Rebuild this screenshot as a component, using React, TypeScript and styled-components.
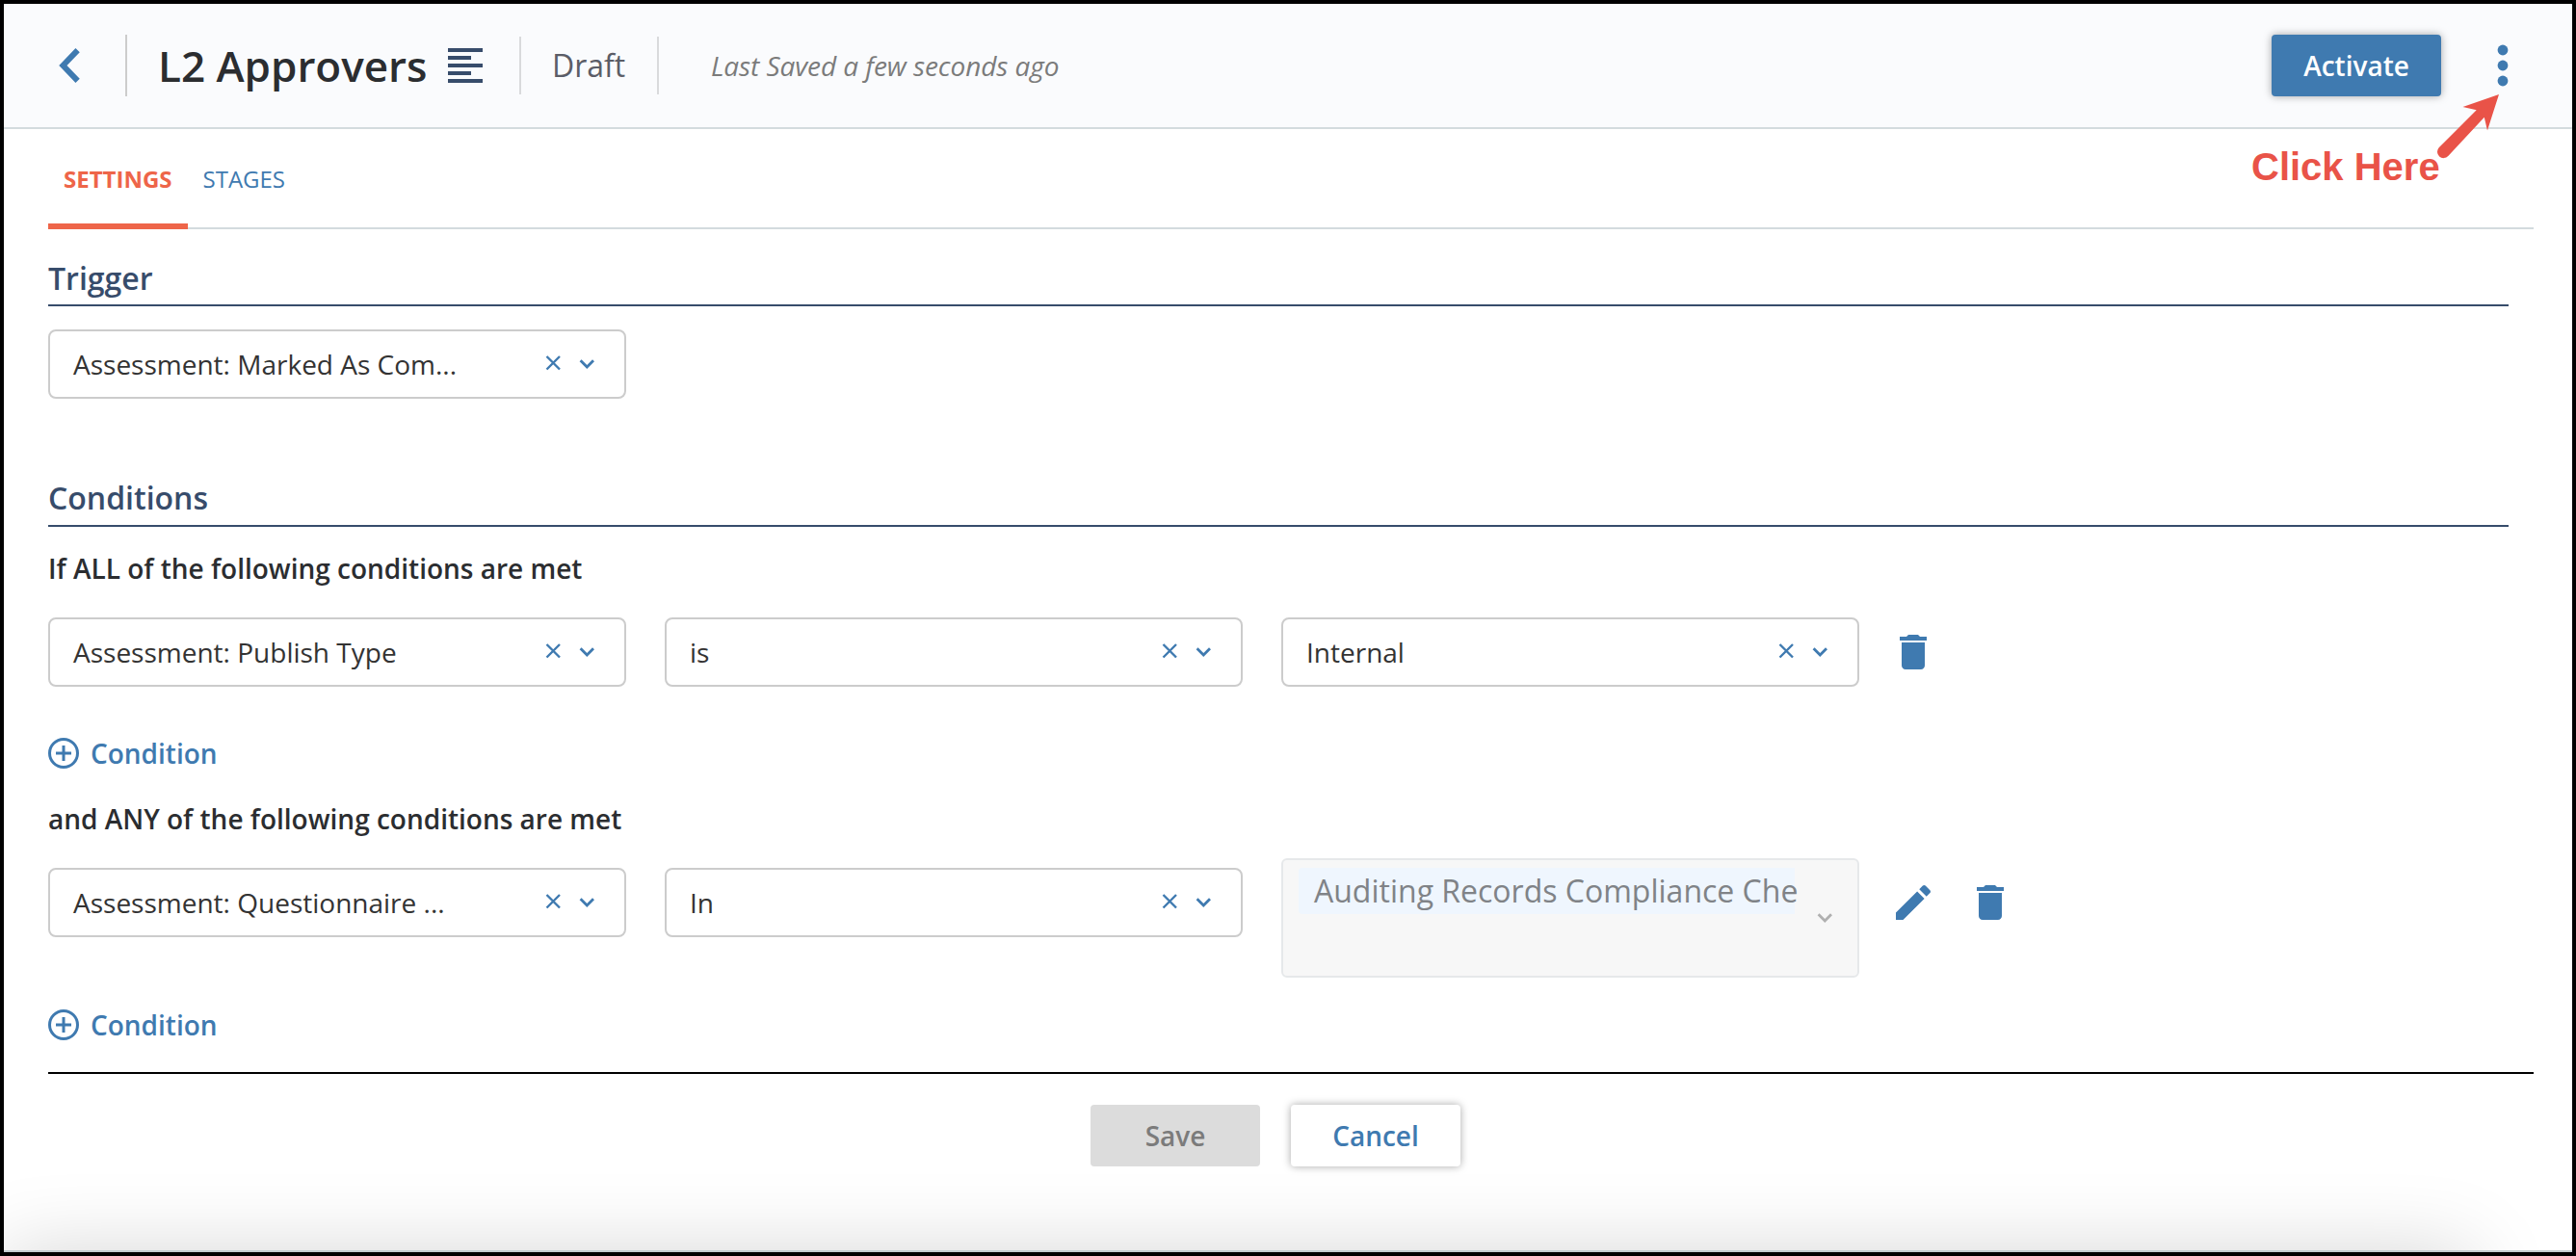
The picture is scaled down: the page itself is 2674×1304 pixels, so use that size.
import { useState } from "react";
import styled, { createGlobalStyle } from "styled-components";

const colors = {
    blue: "#3f7ab0",
    navy: "#374c6b",
    orange: "#ee6549",
    red: "#e95348",
    text: "#2b2d30",
    line: "#d3dbde",
};

const GlobalStyle = createGlobalStyle`
    * {
        box-sizing: border-box;
    }
    body {
        margin: 0;
        background: #000000;
        font-family: "Open Sans", "Noto Sans", sans-serif;
        color: ${colors.text};
    }
    button {
        font-family: inherit;
        cursor: pointer;
    }
`;

const Page = styled.div`
    position: relative;
    width: 2674px;
    height: 1304px;
    border: 4px solid #000000;
    background: #ffffff;
    overflow: hidden;
`;

const Header = styled.header`
    display: flex;
    align-items: center;
    height: 130px;
    padding: 0 61px 0 44px;
    background: #fafbfd;
    border-bottom: 2px solid ${colors.line};
`;

const IconButton = styled.button`
    display: flex;
    align-items: center;
    justify-content: center;
    width: 48px;
    height: 48px;
    padding: 0;
    border: 0;
    background: none;
    color: ${colors.blue};
`;

const Separator = styled.span<{ $height?: number; $gap: string }>`
    width: 2px;
    height: ${(p) => p.$height || 60}px;
    margin: ${(p) => p.$gap};
    background: ${(p) => (p.$height ? "#cccccc" : "#d9dadc")};
`;

const Title = styled.h1`
    width: 301px;
    margin: 0;
    font-size: 44px;
    font-weight: 600;
    line-height: 60px;
    white-space: nowrap;
`;

const Status = styled.span`
    width: 109px;
    font-size: 32px;
    line-height: 44px;
    color: #5b5d67;
`;

const LastSaved = styled.em`
    flex: 1;
    font-size: 28px;
    line-height: 38px;
    letter-spacing: -0.07px;
    color: #7b7b7b;
`;

const Button = styled.button<{ $variant: "primary" | "plain" | "disabled" }>`
    width: 176px;
    height: 64px;
    padding: 0;
    border: 0;
    border-radius: 4px;
    font-size: 28px;
    font-weight: 600;
    line-height: 38px;
    color: ${(p) => ({ primary: "#ffffff", plain: colors.blue, disabled: "#7b7b7b" })[p.$variant]};
    background: ${(p) => ({ primary: colors.blue, plain: "#ffffff", disabled: "#dcdcdc" })[p.$variant]};
    box-shadow: ${(p) => (p.$variant === "disabled" ? "none" : "0 0 8px rgba(0, 0, 0, 0.35)")};
`;

const MoreButton = styled(IconButton)`
    margin-left: 40px;
    margin-right: -13px;
`;

const Callout = styled.div`
    position: absolute;
    top: 92px;
    left: 2333px;
    font-family: "Liberation Sans", Arial, sans-serif;
    font-size: 40px;
    font-weight: 700;
    line-height: 46px;
    color: ${colors.red};

    span {
        display: block;
        padding-top: 54px;
        white-space: nowrap;
    }

    svg {
        position: absolute;
        left: 189px;
        top: 0;
    }
`;

const Content = styled.main`
    padding: 0 40px 0 46px;
`;

const Tabs = styled.nav`
    display: flex;
    height: 104px;
    box-shadow: inset 0 -2px 0 ${colors.line};
`;

const Tab = styled.button<{ $active: boolean }>`
    height: 104px;
    padding: 5px 16px 0;
    border: 0;
    border-bottom: 6px solid ${(p) => (p.$active ? colors.orange : "transparent")};
    background: none;
    font-size: 24px;
    font-weight: ${(p) => (p.$active ? 700 : 400)};
    color: ${(p) => (p.$active ? colors.orange : colors.blue)};
`;

const SectionTitle = styled.h2<{ $top: number; $bottom: number }>`
    margin: ${(p) => p.$top}px 26px 0 0;
    padding-bottom: ${(p) => p.$bottom}px;
    border-bottom: 2px solid ${colors.navy};
    font-size: 32px;
    font-weight: 600;
    line-height: 44px;
    color: ${colors.navy};
`;

const GroupTitle = styled.h3<{ $top: number }>`
    margin: ${(p) => p.$top}px 0 0;
    font-size: 28px;
    font-weight: 600;
    line-height: 38px;
`;

const Row = styled.div<{ $top: number }>`
    display: flex;
    align-items: flex-start;
    gap: 40px;
    margin-top: ${(p) => p.$top}px;
`;

const SelectBox = styled.div`
    display: flex;
    align-items: center;
    width: 600px;
    height: 72px;
    padding: 0 31px 0 24px;
    border: 2px solid #cccccc;
    border-radius: 8px;
    background: #ffffff;
    color: #333333;
`;

const SelectValue = styled.span`
    flex: 1;
    font-size: 28px;
    line-height: 38px;
    white-space: nowrap;
`;

const SelectIcons = styled.span`
    display: flex;
    align-items: center;
    gap: 19px;
    color: ${colors.blue};

    svg:first-child {
        margin-bottom: 3px;
    }
`;

const MultiBox = styled.div`
    display: flex;
    width: 600px;
    height: 124px;
    margin-top: -10px;
    padding: 8px 0 0 16px;
    border: 2px solid #e6e8ea;
    border-radius: 6px;
    background: #f7f7f7;
`;

const Chip = styled.span`
    width: 515px;
    height: 48px;
    padding-left: 16px;
    border-radius: 4px 0 0 4px;
    background: #eff6fe;
    font-size: 32px;
    line-height: 48px;
    white-space: nowrap;
    color: #808387;
`;

const MultiArrow = styled.span`
    display: flex;
    padding: 47px 0 0 23px;
    color: #b0b0b0;
`;

const RowActions = styled.div`
    display: flex;
    gap: 32px;
    padding: 12px 0;
    margin-left: -8px;
`;

const AddCondition = styled.button<{ $top: number }>`
    display: flex;
    align-items: center;
    gap: 12px;
    height: 38px;
    margin-top: ${(p) => p.$top}px;
    padding: 0;
    border: 0;
    background: none;
    font-size: 28px;
    font-weight: 600;
    line-height: 38px;
    color: ${colors.blue};
`;

const Footer = styled.footer`
    display: flex;
    justify-content: center;
    gap: 32px;
    margin-top: 30px;
    padding: 32px 32px 0 0;
    border-top: 2px solid #000000;
`;

// soft shade that rises from the bottom edge of the window
const BottomShade = styled.div`
    position: absolute;
    left: 0;
    right: 105px;
    bottom: -100px;
    height: 100px;
    box-shadow: 0 0 84px rgba(0, 0, 0, 0.17);
    pointer-events: none;
`;

const BottomEdge = styled.div`
    position: absolute;
    left: 0;
    right: 0;
    bottom: 0;
    height: 2px;
    background: #c3cccf;
`;

const CloseIcon = () => (
    <svg width="16" height="16" viewBox="0 0 16 16" fill="none" stroke="currentColor" strokeWidth="2.4">
        <path d="M1.5 1L15 14.5M15 1L1.5 14.5" />
    </svg>
);

const ChevronIcon = () => (
    <svg width="16" height="10" viewBox="0 0 16 10" fill="none" stroke="currentColor" strokeWidth="2.8">
        <path d="M1.6 1.2L8.3 7.9L15 1.2" />
    </svg>
);

const TrashIcon = () => (
    <svg width="48" height="48" viewBox="0 0 24 24" fill="currentColor">
        <path d="M6 19c0 1.1.9 2 2 2h8c1.1 0 2-.9 2-2V7H6v12zM19 4h-3.5l-1-1h-5l-1 1H5v2h14V4z" />
    </svg>
);

const PencilIcon = () => (
    <svg width="48" height="48" viewBox="0 0 24 24" fill="currentColor">
        <path d="M3 17.25V21h3.75L17.81 9.94l-3.75-3.75L3 17.25zM20.71 7.04c.39-.39.39-1.02 0-1.41l-2.34-2.34c-.39-.39-1.02-.39-1.41 0l-1.83 1.83 3.75 3.75 1.83-1.83z" />
    </svg>
);

const PlusCircleIcon = () => (
    <svg width="32" height="32" viewBox="0 0 32 32" fill="none" stroke="currentColor" strokeWidth="3">
        <circle cx="16" cy="16" r="14.5" />
        <path d="M16 8V24M8 16H24" />
    </svg>
);

const Select = ({ value }: { value: string }) => (
    <SelectBox>
        <SelectValue>{value}</SelectValue>
        <SelectIcons>
            <CloseIcon />
            <ChevronIcon />
        </SelectIcons>
    </SelectBox>
);

const tabs = ["SETTINGS", "STAGES"];

const App = () => {
    const [activeTab, setActiveTab] = useState("SETTINGS");

    return (
        <>
            <GlobalStyle />
            <Page>
                <Header>
                    <IconButton aria-label="Back">
                        <svg width="22" height="36" viewBox="0 0 22 36" fill="none" stroke="currentColor" strokeWidth="6">
                            <path d="M19.6 2.2L4.4 18L19.6 33.8" />
                        </svg>
                    </IconButton>
                    <Separator $height={64} $gap="0 32px 0 34px" />
                    <Title>L2 Approvers</Title>
                    <svg width="36" height="36" viewBox="0 0 36 36" fill={colors.navy}>
                        <path d="M0 0h36v4H0zM0 8h24v4H0zM0 16h36v4H0zM0 24h24v4H0zM0 32h36v4H0z" />
                    </svg>
                    <Separator $gap="0 32px 0 38px" />
                    <Status>Draft</Status>
                    <Separator $gap="0 54px 0 0" />
                    <LastSaved>Last Saved a few seconds ago</LastSaved>
                    <Button $variant="primary">Activate</Button>
                    <MoreButton aria-label="More actions">
                        <svg width="12" height="44" viewBox="0 0 12 44" fill="currentColor">
                            <circle cx="6" cy="6" r="5.4" />
                            <circle cx="6" cy="22" r="5.4" />
                            <circle cx="6" cy="38" r="5.4" />
                        </svg>
                    </MoreButton>
                </Header>
                <Content>
                    <Tabs>
                        {tabs.map((tab) => (
                            <Tab key={tab} $active={tab === activeTab} onClick={() => setActiveTab(tab)}>
                                {tab}
                            </Tab>
                        ))}
                    </Tabs>

                    <SectionTitle $top={29} $bottom={5}>Trigger</SectionTitle>
                    <Row $top={24}>
                        <Select value="Assessment: Marked As Com..." />
                    </Row>

                    <SectionTitle $top={81} $bottom={6}>Conditions</SectionTitle>
                    <GroupTitle $top={24}>If ALL of the following conditions are met</GroupTitle>
                    <Row $top={32}>
                        <Select value="Assessment: Publish Type" />
                        <Select value="is" />
                        <Select value="Internal" />
                        <RowActions>
                            <IconButton aria-label="Delete"><TrashIcon /></IconButton>
                        </RowActions>
                    </Row>
                    <AddCondition $top={50}>
                        <PlusCircleIcon />
                        Condition
                    </AddCondition>

                    <GroupTitle $top={30}>and ANY of the following conditions are met</GroupTitle>
                    <Row $top={32}>
                        <Select value="Assessment: Questionnaire ..." />
                        <Select value="In" />
                        <MultiBox>
                            <Chip>Auditing Records Compliance Che</Chip>
                            <MultiArrow><ChevronIcon /></MultiArrow>
                        </MultiBox>
                        <RowActions>
                            <IconButton aria-label="Edit"><PencilIcon /></IconButton>
                            <IconButton aria-label="Delete"><TrashIcon /></IconButton>
                        </RowActions>
                    </Row>
                    <AddCondition $top={30}>
                        <PlusCircleIcon />
                        Condition
                    </AddCondition>

                    <Footer>
                        <Button $variant="disabled" disabled>Save</Button>
                        <Button $variant="plain">Cancel</Button>
                    </Footer>
                </Content>

                <Callout>
                    <span>Click Here</span>
                    <svg width="76" height="76" viewBox="0 0 76 76" fill="currentColor">
                        <path d="M68 2L30.5 15L44.7 18.3L5.7 57.3A6.4 6.4 0 0 0 15.3 66L52.8 25.7L56 39.5Z" />
                    </svg>
                </Callout>
                <BottomShade />
                <BottomEdge />
            </Page>
        </>
    );
};

export default App;
